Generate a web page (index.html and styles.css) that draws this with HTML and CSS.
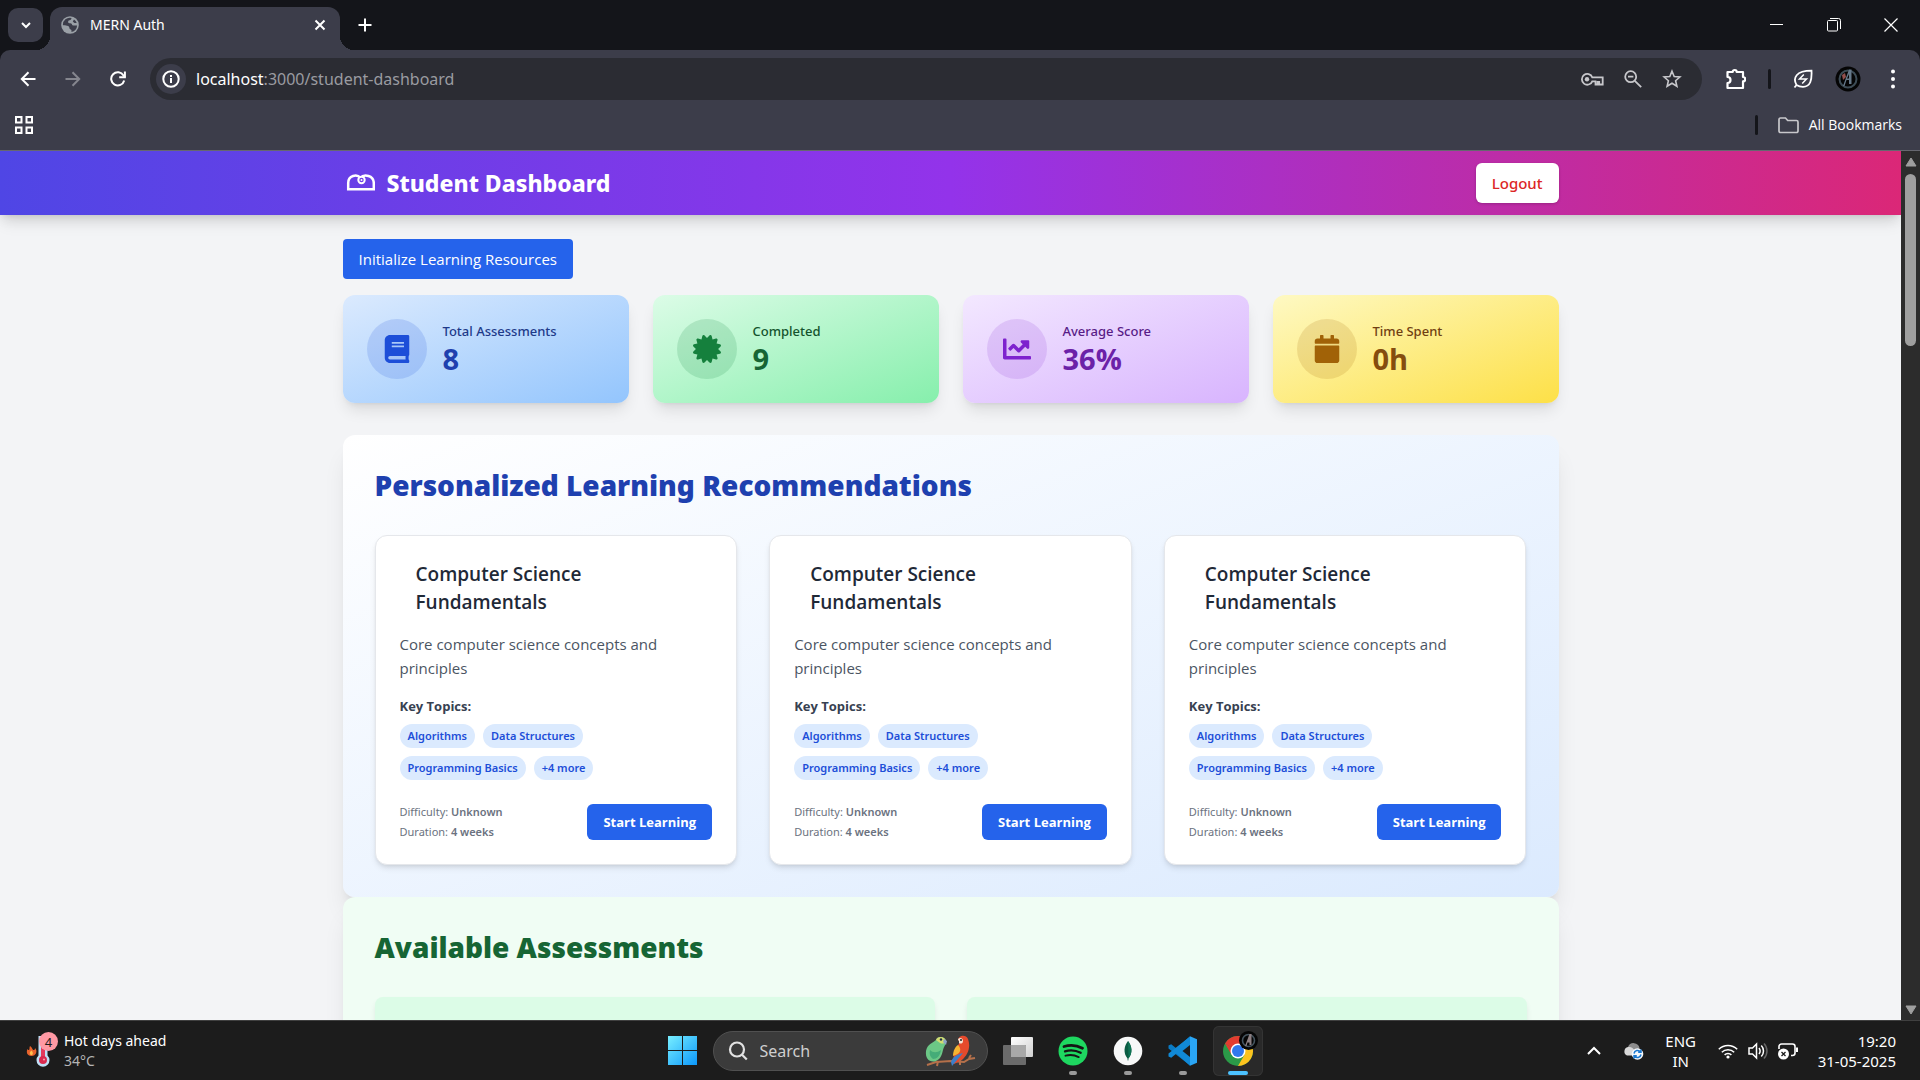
FILE: index.html
```html
<!DOCTYPE html>
<html lang="en">
<head>
<meta charset="utf-8">
<title>MERN Auth</title>
<meta name="viewport" content="width=device-width, initial-scale=1">
<link rel="stylesheet" href="styles.css">
</head>
<body>
<div class="browser">
  <div class="tabstrip">
    <button class="tab-search" aria-label="Search tabs"><svg width="14" height="14" viewBox="0 0 14 14"><path d="M3 5l4 4 4-4" fill="none" stroke="currentColor" stroke-width="2"/></svg></button>
    <div class="tab">
      <svg class="favicon" width="18" height="18" viewBox="0 0 18 18"><circle cx="9" cy="9" r="8.8" fill="#9aa0a6"/><path d="M10.500 1.900c-.3 1.400-.6 2-2 2.300-1.300.2-1.500 1-1.300 2.200.2 1 1.800.5 3 1 1.200.6.500 1.800 2 2.100h3.900a7 7 0 0 1-5.700 6.500c.4-1.700-.2-2.400-1.200-2.700-1.100-.4-.5-2.300-1.600-3-1.500-.9-4-.500-5.700-1.300a7 7 0 0 1 8.600-7.100z" fill="#3c3d4a"/><path d="M13 3.400l-1.200 2.200 1.600 1.500h2.300A7 7 0 0 0 13 3.400z" fill="#3c3d4a"/></svg>
      <span class="tab-title">MERN Auth</span>
      <button class="icon-btn" aria-label="Close tab"><svg width="12" height="12" viewBox="0 0 12 12"><path d="M1.500 1.500l9 9M10.500 1.500l-9 9" stroke="currentColor" stroke-width="2"/></svg></button>
    </div>
    <button class="icon-btn new-tab" aria-label="New tab"><svg width="14" height="14" viewBox="0 0 14 14"><path d="M7 .5v13M.5 7h13" stroke="currentColor" stroke-width="2"/></svg></button>
    <div class="window-controls">
      <button class="icon-btn" aria-label="Minimize"><svg width="14" height="14" viewBox="0 0 14 14"><path d="M0 6.500h13" stroke="currentColor"/></svg></button>
      <button class="icon-btn" aria-label="Restore"><svg width="14" height="14" viewBox="0 0 14 14" fill="none" stroke="currentColor"><rect x=".5" y="2.500" width="10" height="10.500" rx="1"/><path d="M3 .5h8.500a2 2 0 0 1 2 2V11"/></svg></button>
      <button class="icon-btn" aria-label="Close"><svg width="14" height="14" viewBox="0 0 14 14"><path d="M.5.5l13 13M13.500.5l-13 13" stroke="currentColor" stroke-width="1.200"/></svg></button>
    </div>
  </div>

  <div class="chrome">
    <div class="toolbar">
      <div class="nav">
        <button class="icon-btn" aria-label="Back"><svg width="16" height="16" viewBox="0 0 16 16" fill="none" stroke="currentColor" stroke-width="2"><path d="M15.500 8H2M8.500 1.300L1.800 8l6.700 6.700"/></svg></button>
        <button class="icon-btn dim" aria-label="Forward"><svg width="16" height="16" viewBox="0 0 16 16" fill="none" stroke="currentColor" stroke-width="2"><path d="M.5 8H14M7.500 1.300L14.200 8l-6.700 6.700"/></svg></button>
        <button class="icon-btn" aria-label="Reload"><svg width="16" height="16" viewBox="0 0 16 16" fill="none" stroke="currentColor" stroke-width="2"><path d="M14.200 9.500A6.600 6.600 0 1 1 13.500 4.500L15 6.200"/><path d="M14.900.5v5.800H9.200"/></svg></button>
      </div>
      <div class="omnibox">
        <span class="site-info"><svg width="18" height="18" viewBox="0 0 18 18" fill="none" stroke="currentColor" stroke-width="2"><circle cx="9" cy="9" r="7.700"/><path d="M9 8v5M9 5v2"/></svg></span>
        <p class="url"><span class="host">localhost</span>:3000/student-dashboard</p>
        <div class="omni-actions">
          <svg width="24" height="16" viewBox="0 0 24 16" fill="none" stroke="currentColor" stroke-width="1.800"><path d="M12.300 6.300A5.400 5.400 0 1 0 12.300 10.300H15.500V13.500H17.500V11H19.200V13.500H22.700V6.300z"/><circle cx="7" cy="8.300" r="2.200" fill="currentColor" stroke="none"/></svg>
          <svg width="18" height="18" viewBox="0 0 18 18" fill="none" stroke="currentColor" stroke-width="1.800"><circle cx="6.700" cy="6.700" r="5.500"/><path d="M10.800 10.800l6.400 6.400M4 6.700h5.400"/></svg>
          <svg width="20" height="20" viewBox="0 0 20 20" fill="none" stroke="currentColor" stroke-width="1.600"><path d="M10 2.200l2.200 5.300 5.700.5-4.300 3.700 1.300 5.600-4.900-3-4.900 3 1.300-5.600L2.100 8l5.700-.5z"/></svg>
        </div>
      </div>
      <div class="toolbar-end">
        <svg width="20" height="22" viewBox="1 0 20 22" fill="none" stroke="currentColor" stroke-width="2.200"><path d="M2.500 4H7.700a2 2 0 0 1 4 0H18V9a2 2 0 0 1 0 4.400V20H2.500V15a3 3 0 0 0 0-6z" stroke-linejoin="round"/></svg>
        <span class="divider"></span>
        <svg width="20" height="20" viewBox="0 0 20 20" fill="none" stroke="currentColor" stroke-width="1.800"><path d="M1.500 18.500l2-2.500C-.5 9 3 1.700 18.500 1.700 19 11 17.500 17.800 10 17.800c-2.700 0-4.600-.6-6.500-1.800"/><path d="M10.800 5.500L6.500 10h7l-4.300 4.500" stroke-width="1.500"/></svg>
        <svg width="26" height="26" viewBox="0 0 26 26"><circle cx="13" cy="13" r="12.500" fill="#050505"/><circle cx="13" cy="13" r="8.500" fill="none" stroke="#3d4c56" stroke-width="2"/><path d="M8 20L14 3.500h2.500v14.500h-2.500V14h-2.500L9.500 20zM12 12.500h2V8z" fill="#66798a"/><path d="M7 9l3-2 1 4-3 3z" fill="#94504d"/></svg>
        <svg width="17" height="20" viewBox="-7 0 17 20" fill="currentColor"><circle cx="3" cy="2.500" r="2"/><circle cx="3" cy="10" r="2"/><circle cx="3" cy="17.500" r="2"/></svg>
      </div>
    </div>
    <div class="bookmarks">
      <button class="icon-btn" aria-label="Apps"><svg width="20" height="20" viewBox="0 0 20 20" fill="none" stroke="currentColor" stroke-width="2"><path d="M2 2h5.500v5.500H2zM12.500 2H18v5.500h-5.500zM2 12.500h5.500V18H2zM12.500 12.500H18V18h-5.500z"/></svg></button>
      <div class="bookmarks-end">
        <span class="divider"></span>
        <svg width="21" height="17" viewBox="0 0 21 17" fill="none" stroke="#c7c7cb" stroke-width="1.700"><path d="M1 14V2.500a1.500 1.500 0 0 1 1.500-1.500H7.500l2.200 2.500H18.500a1.500 1.500 0 0 1 1.500 1.500V14a1.500 1.500 0 0 1-1.500 1.500h-16A1.500 1.500 0 0 1 1 14z"/></svg>
        <span>All Bookmarks</span>
      </div>
    </div>
  </div>

  <div class="viewport">
    <div class="page">
      <header class="header">
        <div class="container header-row">
          <div class="brand">
            <svg width="32" height="24" viewBox="0 0 32 24" fill="none" stroke="#fff" stroke-width="2.500"><path d="M5.200 18.300V12C5.200 4.500 14 2.500 17.500 7 21 2.500 30.800 4.500 30.800 12V18.300z"/><circle cx="18.500" cy="9" r="3.200" fill="#6d3ce6" stroke-width="2"/><circle cx="18.500" cy="9" r="1" fill="#fff" stroke="none"/></svg>
            <h1>Student Dashboard</h1>
          </div>
          <button class="logout">Logout</button>
        </div>
      </header>

      <main class="container main">
        <button class="init">Initialize Learning Resources</button>

        <div class="stats">
          <article class="stat blue">
            <span class="stat-icon"><svg width="28" height="28" viewBox="-32 0 512 512" fill="currentColor"><path d="M448 360V24c0-13.300-10.700-24-24-24H96C43 0 0 43 0 96v320c0 53 43 96 96 96h328c13.300 0 24-10.700 24-24v-16c0-7.500-3.500-14.300-8.900-18.700-4.200-15.400-4.200-59.300 0-74.700 5.400-4.300 8.900-11.100 8.900-18.600zM128 134c0-3.300 2.700-6 6-6h212c3.300 0 6 2.700 6 6v20c0 3.300-2.700 6-6 6H134c-3.300 0-6-2.700-6-6v-20zm0 64c0-3.300 2.700-6 6-6h212c3.300 0 6 2.700 6 6v20c0 3.300-2.700 6-6 6H134c-3.300 0-6-2.700-6-6v-20zm253.400 250H96c-17.700 0-32-14.300-32-32 0-17.600 14.400-32 32-32h285.400c-1.900 17.100-1.900 46.900 0 64z"/></svg></span>
            <div><p class="stat-label">Total Assessments</p><p class="stat-value">8</p></div>
          </article>
          <article class="stat green">
            <span class="stat-icon"><svg width="28" height="28" viewBox="0 0 512 512" fill="currentColor"><path d="M458.622 255.920l45.985-45.005c13.708-12.977 7.316-36.039-10.664-40.339l-62.650-15.990 17.661-62.015c4.991-17.838-11.829-34.663-29.661-29.671l-61.994 17.667-15.984-62.671C337.085.197 313.765-6.276 300.990 7.228L256 53.570 211.011 7.229c-12.630-13.351-36.047-7.234-40.325 10.668l-15.984 62.671-61.995-17.667C74.870 57.907 58.056 74.738 63.046 92.572l17.661 62.015-62.650 15.990C.069 174.878-6.310 197.944 7.392 210.915l45.985 45.005-45.985 45.004c-13.708 12.977-7.316 36.039 10.664 40.339l62.650 15.990-17.661 62.015c-4.991 17.838 11.829 34.663 29.661 29.671l61.994-17.667 15.984 62.671c4.439 18.575 27.696 24.018 40.325 10.668L256 458.610l44.989 46.001c12.500 13.488 35.987 7.486 40.325-10.668l15.984-62.671 61.994 17.667c17.836 4.994 34.651-11.837 29.661-29.671l-17.661-62.015 62.650-15.990c17.987-4.302 24.366-27.367 10.664-40.339l-45.984-45.004z"/></svg></span>
            <div><p class="stat-label">Completed</p><p class="stat-value">9</p></div>
          </article>
          <article class="stat purple">
            <span class="stat-icon"><svg width="28" height="28" viewBox="0 0 512 512" fill="currentColor"><path d="M496 384H64V80c0-8.840-7.160-16-16-16H16C7.160 64 0 71.160 0 80v336c0 17.670 14.330 32 32 32h464c8.840 0 16-7.160 16-16v-32c0-8.840-7.160-16-16-16zM464 96H345.940c-21.380 0-32.090 25.850-16.970 40.970l32.400 32.400L288 242.750l-73.370-73.370c-12.500-12.500-32.760-12.500-45.250 0l-68.690 68.690c-6.250 6.250-6.250 16.380 0 22.630l22.620 22.620c6.250 6.250 16.380 6.250 22.630 0L192 237.250l73.370 73.370c12.500 12.500 32.760 12.500 45.250 0l96-96 32.400 32.400c15.120 15.120 40.970 4.410 40.970-16.970V112c.01-8.840-7.150-16-15.990-16z"/></svg></span>
            <div><p class="stat-label">Average Score</p><p class="stat-value">36%</p></div>
          </article>
          <article class="stat yellow">
            <span class="stat-icon"><svg width="28" height="28" viewBox="-32 0 512 512" fill="currentColor"><path d="M12 192h424c6.600 0 12 5.400 12 12v260c0 26.500-21.500 48-48 48H48c-26.500 0-48-21.500-48-48V204c0-6.600 5.400-12 12-12zm436-44v-36c0-26.500-21.500-48-48-48h-48V12c0-6.600-5.400-12-12-12h-40c-6.600 0-12 5.400-12 12v52H160V12c0-6.600-5.400-12-12-12h-40c-6.600 0-12 5.400-12 12v52H48C21.500 64 0 85.500 0 112v36c0 6.600 5.400 12 12 12h424c6.600 0 12-5.400 12-12z"/></svg></span>
            <div><p class="stat-label">Time Spent</p><p class="stat-value">0h</p></div>
          </article>
        </div>

        <section class="panel recommendations">
          <h2>Personalized Learning Recommendations</h2>
          <div class="courses">
            <article class="course">
              <h3>Computer Science Fundamentals</h3>
              <p class="desc">Core computer science concepts and principles</p>
              <h4>Key Topics:</h4>
              <ul class="topics"><li>Algorithms</li><li>Data Structures</li><li>Programming Basics</li><li>+4 more</li></ul>
              <div class="course-foot">
                <div class="meta"><p>Difficulty: <b>Unknown</b></p><p>Duration: <b>4 weeks</b></p></div>
                <button class="start">Start Learning</button>
              </div>
            </article>
            <article class="course">
              <h3>Computer Science Fundamentals</h3>
              <p class="desc">Core computer science concepts and principles</p>
              <h4>Key Topics:</h4>
              <ul class="topics"><li>Algorithms</li><li>Data Structures</li><li>Programming Basics</li><li>+4 more</li></ul>
              <div class="course-foot">
                <div class="meta"><p>Difficulty: <b>Unknown</b></p><p>Duration: <b>4 weeks</b></p></div>
                <button class="start">Start Learning</button>
              </div>
            </article>
            <article class="course">
              <h3>Computer Science Fundamentals</h3>
              <p class="desc">Core computer science concepts and principles</p>
              <h4>Key Topics:</h4>
              <ul class="topics"><li>Algorithms</li><li>Data Structures</li><li>Programming Basics</li><li>+4 more</li></ul>
              <div class="course-foot">
                <div class="meta"><p>Difficulty: <b>Unknown</b></p><p>Duration: <b>4 weeks</b></p></div>
                <button class="start">Start Learning</button>
              </div>
            </article>
          </div>
        </section>

        <section class="panel available">
          <h2>Available Assessments</h2>
          <div class="assessments"><div class="assessment"></div><div class="assessment"></div></div>
        </section>
      </main>
    </div>
    <div class="scrollbar" aria-hidden="true">
      <svg width="12" height="10" viewBox="0 0 12 10"><path d="M6 1l5 8H1z" fill="#9f9f9f" stroke="#9f9f9f" stroke-linejoin="round"/></svg>
      <div class="track"><div class="thumb"></div></div>
      <svg width="12" height="10" viewBox="0 0 12 10"><path d="M6 9L1 1h10z" fill="#9f9f9f" stroke="#9f9f9f" stroke-linejoin="round"/></svg>
    </div>
  </div>
</div>

<footer class="taskbar">
  <div class="weather">
    <svg width="38" height="38" viewBox="0 0 38 38">
      <path d="M4 14c3 2 2 4 4 4 1 0 1-2 1-2 3 3 1 8-3.500 8S0 20 1.500 17c.5 1 1 1 1.500 1 1-1 0-2 1-4z" fill="#e8632c"/><path d="M5.500 18.500c2 2 1.500 4.500 0 4.500s-2.500-2-1-3.500z" fill="#ffc04d"/>
      <path d="M12.500 4h9v19.500a6.500 6.500 0 1 1-9 0z" fill="#bfe0f7"/><path d="M15 10h4v16h-4z" fill="#e33a5c"/><circle cx="17" cy="28" r="4" fill="#d92a4f"/><circle cx="18" cy="27.500" r="1" fill="#ff9fb0"/>
      <circle cx="22.500" cy="9.500" r="9.500" fill="#ff99a4"/><text x="22.500" y="14.500" text-anchor="middle" class="badge-num">4</text>
    </svg>
    <div><p>Hot days ahead</p><p class="temp">34°C</p></div>
  </div>

  <div class="apps">
    <button class="app" aria-label="Start"><svg width="29" height="29" viewBox="0 0 29 29"><defs><linearGradient id="win" gradientUnits="userSpaceOnUse" x1="0" y1="0" x2="29" y2="29"><stop offset="0" stop-color="#78efff"/><stop offset="1" stop-color="#0c98fb"/></linearGradient></defs><path d="M0 0h14v14H0zM15 0h14v14H15zM0 15h14v14H0zM15 15h14v14H15z" fill="url(#win)"/></svg></button>
    <div class="search">
      <svg width="20" height="20" viewBox="0 0 20 20" fill="none" stroke="#e2e2e2" stroke-width="2.200"><circle cx="9" cy="8.500" r="7"/><path d="M13.800 13.500l5 5"/></svg>
      <input type="text" placeholder="Search" aria-label="Search">
      <svg width="52" height="32" viewBox="0 0 52 32">
        <path d="M2 30l9-3 15-1 13 1 5-3 6-1M44 23l2-3" fill="none" stroke="#b5704a" stroke-width="2"/>
        <path d="M1 16C2 9 8 8 11 5c1-4 9-4 10 1 0 4-2 5-3 9s-2 9-7 11C5 28 0 24 1 16z" fill="#6cc786"/><path d="M11 5c1-4 9-4 10 1-1 3-4 3-6 2z" fill="#d3dc72"/><path d="M5 15c3 3 7 3 11 0-1 6-4 9-8 9-3-2-4-5-3-9z" fill="#45ac78"/><circle cx="16" cy="4.500" r="1.200" fill="#223344"/><path d="M19 4l3 2-1 4-3-3z" fill="#8ea4c6"/>
        <path d="M33 6c0-6 8-7 10-2 3 8 0 16-6 21l-8 4c-2-6 1-12 4-16z" fill="#e64a2c"/><path d="M33 10c4 4 3 9-5 11 0-5 2-9 5-11z" fill="#f6b431"/><path d="M38 18l-11 13-1-4c1-5 7-8 12-9z" fill="#3d7fc9"/><path d="M33 4c2-2 5-1 5 2s-3 3-4 2z" fill="#f3e3d5"/><circle cx="36" cy="5" r="1" fill="#222222"/><path d="M34 5l-2 3 2 2z" fill="#3a3a3a"/>
        <path d="M13 26l-1 5M35 25v5" stroke="#b5704a" stroke-width="2"/>
      </svg>
    </div>
    <button class="app" aria-label="Task view"><svg width="30" height="28" viewBox="0 0 30 28"><defs><linearGradient id="tv" x1="0" y1="0" x2="1" y2="1"><stop offset="0" stop-color="#fff"/><stop offset="1" stop-color="#d0d0d0"/></linearGradient></defs><rect x="8" y="0" width="22" height="20" rx="1" fill="url(#tv)"/><rect x="0" y="8" width="23" height="20" rx="1" fill="#6b6b6b"/><path d="M8 8h14a1 1 0 0 1 1 1v11H8z" fill="#a8a8a8"/></svg></button>
    <button class="app running" aria-label="Spotify"><svg width="30" height="30" viewBox="0 0 30 30"><circle cx="15" cy="15" r="14.500" fill="#1ed760"/><g fill="none" stroke="#151515" stroke-linecap="round"><path d="M6 10.500c6-1.800 13-1.200 18.500 1.700" stroke-width="2.800"/><path d="M7 15.300c5-1.500 11-1 15.700 1.500" stroke-width="2.300"/><path d="M7.500 19.700c4.500-1.200 9-.8 13.200 1.400" stroke-width="1.900"/></g></svg></button>
    <button class="app running" aria-label="MongoDB Compass"><svg width="30" height="30" viewBox="0 0 30 30"><circle cx="15" cy="15" r="14.300" fill="#f7f8f8"/><path d="M15 5c4 5 5 12 .5 17.500l-.2 2h-.6l-.2-2C10 17 11 10 15 5z" fill="#0a5c43"/><path d="M15 5c4 5 5 12 .5 17.500z" fill="#0f7354"/></svg></button>
    <button class="app running" aria-label="Visual Studio Code"><svg width="30" height="30" viewBox="0 0 30 30"><path d="M22 .3L8.500 12.500 3.200 8.300.5 9.500v3l21.500 17z" fill="#0a7bc4"/><path d="M22 29.700L8.500 17.500 3.200 21.700.5 20.500v-3L22 .5z" fill="#1189d6"/><path d="M22 9l-7.500 6 7.500 6z" fill="#1c1c1c"/><path d="M22 .2l7 3v23.600l-7 3z" fill="#2aa5f4"/></svg></button>
    <button class="app running active" aria-label="Google Chrome"><svg width="40" height="40" viewBox="0 0 40 40"><circle cx="20" cy="20" r="15" fill="#2b9a48"/><path d="M20 20L7 12.500A15 15 0 0 1 33 12.500z" fill="#e43c30"/><path d="M7 12.500l6.500 11.200L20 20z" fill="#e43c30"/><path d="M20 13h13.300A15 15 0 0 1 20 35l6.500-11.200z" fill="#fcc31e"/><circle cx="20" cy="20" r="7.500" fill="#fff"/><circle cx="20" cy="20" r="6" fill="#3178ec"/><circle cx="30.500" cy="9.500" r="9.500" fill="#060606"/><circle cx="30.500" cy="9.500" r="6" fill="none" stroke="#45545e" stroke-width="1.600"/><path d="M27 15l4.500-12h2v11h-2v-2.500h-2L28.500 15z" fill="#8c7f82"/></svg></button>
  </div>

  <div class="tray">
    <svg width="14" height="10" viewBox="0 0 14 10"><path d="M1 8l6-6 6 6" fill="none" stroke="#fff" stroke-width="2"/></svg>
    <svg class="cloud" width="21" height="18" viewBox="0 0 21 18"><path d="M5 5a6 6 0 0 1 11.500 1L12 13H5z" fill="#8d8d8d"/><path d="M4 13.500a4.500 4.500 0 0 1 1-8.500c3-.5 5 .5 7 4l-2 4.500z" fill="#d9d9d9"/><circle cx="14.500" cy="12" r="5.800" fill="#f4f8fc"/><path d="M11 11.500a3.700 3.700 0 0 1 6.500-1.700M18 7.500v2.800h-2.800M18 12.500a3.700 3.700 0 0 1-6.500 1.700M11 16.500v-2.800h2.800" fill="none" stroke="#1a78cf" stroke-width="1.500"/></svg>
    <p class="lang">ENG<br>IN</p>
    <div class="status">
      <svg width="20" height="16" viewBox="0 0 20 16" fill="none" stroke="#fff" stroke-width="1.500"><path d="M.8 6.200a13 13 0 0 1 18.400 0M3.800 9.200a8.800 8.800 0 0 1 12.400 0M6.600 11.900a4.800 4.800 0 0 1 6.800 0"/><circle cx="10" cy="14" r="1.600" fill="#fff" stroke="none"/></svg>
      <svg width="20" height="18" viewBox="0 0 20 18" fill="none" stroke="#fff" stroke-width="1.500"><path d="M1 6h3.500L8.500 2v14l-4-4H1z"/><path d="M11 6a5 5 0 0 1 0 6M13.300 3.500a8 8 0 0 1 0 11"/><path d="M16 1.500a11 11 0 0 1 0 15" stroke="#666"/></svg>
      <svg width="20" height="18" viewBox="0 0 20 18" fill="none" stroke="#fff" stroke-width="1.600"><path d="M1 7V4.500A2.500 2.500 0 0 1 3.500 2h11A2.500 2.500 0 0 1 17 4.500v6.500a2.500 2.500 0 0 1-2.500 2.500H13"/><path d="M19 5.500v4.500" stroke-width="2"/><circle cx="5.500" cy="12" r="5.500" fill="#fff" stroke="none"/><path d="M3.500 10l4 4M7.500 10l-4 4" stroke="#1c1c1c" stroke-width="1.300"/></svg>
    </div>
    <p class="clock">19:20<br>31-05-2025</p>
  </div>
</footer>
</body>
</html>
```
FILE: styles.css
```css
*, *::before, *::after { box-sizing: border-box; }

body, h1, h2, h3, h4, p, ul { margin: 0; padding: 0; }

body {
  display: flex;
  flex-direction: column;
  height: 100vh;
  overflow: hidden;
  font-family: "Open Sans", "Noto Sans", sans-serif;
  font-size: 15px;
  line-height: 24px;
  color: #1f2937;
  background: #14151a;
}

button { font: inherit; border: 0; cursor: pointer; }
svg { display: block; flex: none; }

.icon-btn {
  display: flex;
  align-items: center;
  justify-content: center;
  padding: 0;
  background: none;
  color: #fff;
}

/* Browser frame */
.browser {
  flex: 1;
  min-height: 0;
  display: flex;
  flex-direction: column;
}

.tabstrip {
  display: flex;
  align-items: center;
  height: 50px;
  padding-left: 8px;
  color: #fff;
}

.tab-search {
  display: flex;
  align-items: center;
  justify-content: center;
  width: 35px;
  height: 34px;
  padding: 0;
  border-radius: 10px;
  background: #3c3d4a;
  color: #fff;
}

.tab {
  position: relative;
  align-self: flex-end;
  display: flex;
  align-items: center;
  gap: 11px;
  width: 290px;
  height: 43px;
  margin-left: 7px;
  padding: 0 14px 7px 11px;
  border-radius: 12px 12px 0 0;
  background: #3c3d4a;
}

.tab::before, .tab::after {
  content: "";
  position: absolute;
  bottom: 0;
  width: 14px;
  height: 14px;
}
.tab::before { right: 100%; background: radial-gradient(circle at 0 0, transparent 14px, #3c3d4a 14px); }
.tab::after { left: 100%; background: radial-gradient(circle at 100% 0, transparent 14px, #3c3d4a 14px); }

.tab-title { flex: 1; font-family: "Noto Sans", sans-serif; font-size: 14px; line-height: 20px; }
.new-tab { width: 50px; height: 34px; }

.window-controls { display: flex; margin-left: auto; padding-right: 1px; }
.window-controls .icon-btn { width: 57px; height: 48px; }

.chrome {
  border-bottom: 1px solid #66676f;
  border-radius: 10px 10px 0 0;
  background: #3c3d4a;
  color: #fff;
}

.toolbar {
  display: flex;
  align-items: center;
  padding: 8px 20px;
}

.nav { display: flex; gap: 29px; }
.nav .icon-btn { width: 16px; height: 42px; }
.nav .dim { color: #85868e; }

.omnibox {
  flex: 1;
  display: flex;
  align-items: center;
  height: 42px;
  margin-left: 24px;
  padding: 0 20px 0 6px;
  border-radius: 21px;
  background: #2b2c33;
}

.site-info {
  display: flex;
  align-items: center;
  justify-content: center;
  width: 30px;
  height: 30px;
  margin-right: 10px;
  border-radius: 50%;
  background: #3c3d4a;
}

.url { flex: 1; font-family: "Noto Sans", sans-serif; font-size: 16px; color: #9a9ba1; }
.host { color: #fff; }
.omni-actions { display: flex; align-items: center; gap: 20px; color: #c7c7cb; }

.toolbar-end {
  display: flex;
  align-items: center;
  gap: 22px;
  margin-left: 24px;
}
.divider { width: 3px; height: 20px; border-radius: 2px; background: #14151a; }

.bookmarks {
  display: flex;
  align-items: center;
  justify-content: space-between;
  height: 42px;
  padding: 0 18px 8px 14px;
}
.bookmarks-end { display: flex; align-items: center; gap: 10px; font-size: 14px; }
.bookmarks-end .divider { margin-right: 10px; }

/* Page */
.viewport {
  flex: 1;
  min-height: 0;
  display: flex;
  background: #f3f4f6;
}

.page {
  flex: 1;
  overflow-y: auto;
  scrollbar-width: none;
}

.scrollbar {
  display: flex;
  flex-direction: column;
  align-items: center;
  justify-content: space-between;
  width: 19px;
  padding: 6px 0 5px;
  background: #2c2c2c;
}
.track { flex: 1; padding: 7px 0; }
.thumb { width: 11px; height: 172px; border-radius: 6px; background: #9f9f9f; }

.container {
  width: 100%;
  max-width: 1280px;
  margin: 0 auto;
  padding: 0 32px;
}

.header {
  background: linear-gradient(to right, #4f46e5, #9333ea, #db2777);
  box-shadow: 0 10px 15px -3px rgba(0, 0, 0, .1), 0 4px 6px -4px rgba(0, 0, 0, .1), 0 4px 12px rgba(0, 0, 0, .06);
}
.header-row {
  display: flex;
  align-items: center;
  justify-content: space-between;
  min-height: 64px;
}
.brand { display: flex; align-items: center; gap: 12px; }
.brand h1 { font-family: "Noto Sans", sans-serif; font-size: 23px; line-height: 32px; font-weight: 800; color: #fff; }

.logout {
  padding: 8px 16px;
  border-radius: 6px;
  background: #fff;
  color: #dc2626;
  font-family: "Noto Sans", sans-serif;
  font-weight: 500;
  box-shadow: 0 1px 3px rgba(0, 0, 0, .2);
}

.main { padding-top: 24px; padding-bottom: 32px; }

.init {
  display: block;
  padding: 8px 16px;
  border-radius: 4px;
  background: #2563eb;
  color: #fff;
}

.stats {
  display: grid;
  grid-template-columns: repeat(4, 1fr);
  gap: 24px;
  margin: 16px 0 32px;
}
.stat {
  display: flex;
  align-items: center;
  gap: 16px;
  padding: 24px;
  border-radius: 12px;
  box-shadow: 0 10px 15px -3px rgba(0, 0, 0, .1), 0 4px 6px -4px rgba(0, 0, 0, .1);
}
.stat-icon {
  display: flex;
  align-items: center;
  justify-content: center;
  width: 60px;
  height: 60px;
  border-radius: 50%;
}
.stat-label { font-family: "Noto Sans", sans-serif; font-size: 13px; line-height: 20px; font-weight: 500; }
.stat-value { font-size: 29px; line-height: 36px; font-weight: 700; }

.blue { background: linear-gradient(to bottom right, #dbeafe, #93c5fd); color: #1e40af; }
.blue .stat-icon { background: rgba(29, 78, 216, .16); color: #1d4ed8; }
.blue .stat-label { color: #1e3a8a; }
.green { background: linear-gradient(to bottom right, #dcfce7, #86efac); color: #166534; }
.green .stat-icon { background: rgba(21, 128, 61, .16); color: #15803d; }
.green .stat-label { color: #14532d; }
.purple { background: linear-gradient(to bottom right, #f3e8ff, #d8b4fe); color: #6b21a8; }
.purple .stat-icon { background: rgba(126, 34, 206, .14); color: #7e22ce; }
.purple .stat-label { color: #581c87; }
.yellow { background: linear-gradient(to bottom right, #fef9c3, #fde047); color: #854d0e; }
.yellow .stat-icon { background: rgba(161, 98, 7, .16); color: #a16207; }
.yellow .stat-label { color: #713f12; }

.panel {
  padding: 32px;
  border-radius: 12px;
  box-shadow: 0 20px 25px -5px rgba(0, 0, 0, .1), 0 8px 10px -6px rgba(0, 0, 0, .1);
}
.panel h2 {
  margin-bottom: 32px;
  font-family: "Noto Sans", sans-serif;
  font-size: 28px;
  line-height: 36px;
  font-weight: 900;
}
.recommendations { background: linear-gradient(to bottom right, #fff, #dbeafe); }
.recommendations h2 { color: #1e40af; }
.available { background: #f0fdf4; }
.available h2 { color: #166534; }

.courses { display: grid; grid-template-columns: repeat(3, 1fr); gap: 32px; }
.course {
  padding: 24px;
  border: 1px solid #e5e7eb;
  border-radius: 12px;
  background: #fff;
  box-shadow: 0 4px 6px -1px rgba(0, 0, 0, .1), 0 2px 4px -2px rgba(0, 0, 0, .1);
}
.course h3 { padding: 0 16px; font-size: 19px; line-height: 28px; font-weight: 600; }
.desc { margin: 16px 0; color: #4b5563; }
.course h4 { font-size: 13px; line-height: 20px; font-weight: 700; color: #374151; }

.topics { display: flex; flex-wrap: wrap; gap: 8px; margin: 8px 0 24px; list-style: none; }
.topics li {
  padding: 4px 8px;
  border-radius: 12px;
  background: #dbeafe;
  color: #1d4ed8;
  font-family: "Noto Sans", sans-serif;
  font-size: 11px;
  line-height: 16px;
  font-weight: 600;
}

.course-foot { display: flex; align-items: center; justify-content: space-between; }
.meta { display: grid; gap: 4px; font-family: "Noto Sans", sans-serif; font-size: 11px; line-height: 16px; color: #6b7280; }
.meta b { font-weight: 600; }
.start {
  padding: 8px 16px;
  border-radius: 6px;
  background: #2563eb;
  color: #fff;
  font-size: 13px;
  line-height: 20px;
  font-weight: 700;
}

.assessments { display: grid; grid-template-columns: 1fr 1fr; gap: 32px; }
.assessment {
  height: 180px;
  border-radius: 8px;
  background: #dcfce7;
  box-shadow: 0 4px 6px -1px rgba(0, 0, 0, .1);
}

/* Taskbar */
.taskbar {
  display: grid;
  grid-template-columns: 1fr auto 1fr;
  align-items: center;
  height: 60px;
  border-top: 1px solid #404040;
  background: #1c1c1c;
  color: #fff;
  font-family: "Noto Sans", sans-serif;
  font-size: 14px;
  line-height: 20px;
}

.weather { display: flex; align-items: center; padding-left: 26px; }
.temp { color: #b5b5b5; }
.badge-num { font-size: 13px; fill: #1c1c1c; }

.apps { display: flex; align-items: center; gap: 5px; }
.app {
  position: relative;
  display: flex;
  align-items: center;
  justify-content: center;
  width: 50px;
  height: 50px;
  padding: 0;
  border-radius: 6px;
  background: none;
}
.running::after {
  content: "";
  position: absolute;
  bottom: 1px;
  left: 50%;
  width: 8px;
  height: 4px;
  border-radius: 2px;
  background: #9a9a9a;
  transform: translateX(-50%);
}
.active { background: #292929; box-shadow: inset 0 0 0 1px #343434; }
.active::after { width: 20px; background: #4cc2ff; }

.search {
  display: flex;
  align-items: center;
  gap: 12px;
  width: 275px;
  height: 40px;
  padding: 0 10px 0 14px;
  border: 1px solid #505050;
  border-radius: 20px;
  background: #3b3b3b;
}
.search input {
  flex: 1;
  min-width: 0;
  padding: 0;
  border: 0;
  outline: 0;
  background: none;
  color: #fff;
  font: inherit;
  font-size: 16px;
}
.search input::placeholder { color: #cfcfcf; opacity: 1; }

.tray {
  display: flex;
  align-items: center;
  justify-content: flex-end;
  padding-right: 24px;
  font-size: 15px;
}
.cloud { margin-left: 22px; }
.lang { width: 74px; text-align: center; }
.status { display: flex; align-items: center; gap: 10px; }
.clock { margin-left: 20px; text-align: right; }
```
